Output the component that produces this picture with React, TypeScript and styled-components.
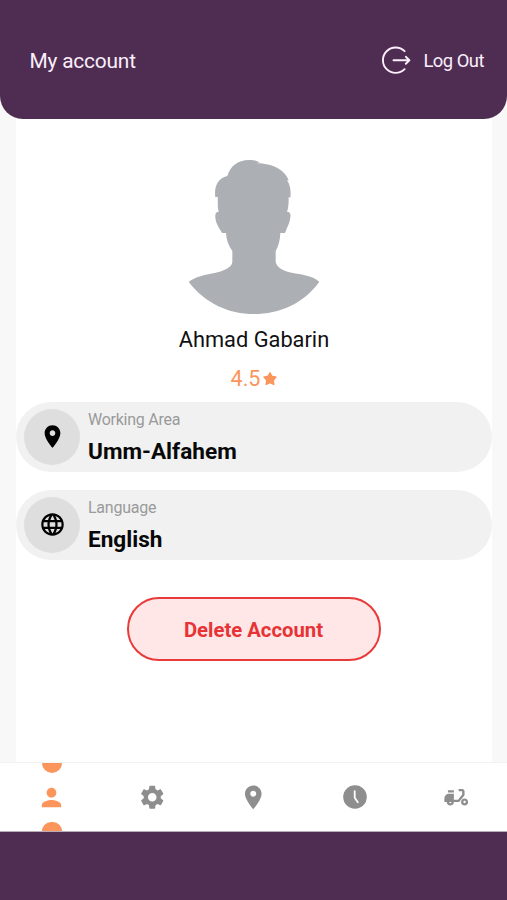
import React from 'react';
import styled, { createGlobalStyle } from 'styled-components';

const GlobalStyle = createGlobalStyle`
  * { box-sizing: border-box; }
  body { margin: 0; background: #4f2d52; font-family: Roboto, 'Liberation Sans', sans-serif; }
  button { font-family: inherit; border: 0; background: none; padding: 0; cursor: pointer; }
  svg { display: block; flex: none; }
`;

const Screen = styled.div`
  height: 900px;
  display: flex;
  flex-direction: column;
  background: #4f2d52;
`;

const Body = styled.div`
  height: 762px;
  display: flex;
  flex-direction: column;
  background: #f8f8f8;
`;

const Header = styled.header`
  height: 119px;
  flex: none;
  padding: 3px 23px 0 29.5px;
  display: flex;
  align-items: center;
  justify-content: space-between;
  background: #4f2d52;
  border-radius: 0 0 23px 23px;
  color: #fbeffb;
`;

const Title = styled.h1`
  margin: 0;
  font-size: 20.9px;
  line-height: 24px;
  letter-spacing: -0.2px;
  font-weight: 400;
`;

const LogOutButton = styled.button`
  display: flex;
  align-items: center;
  gap: 12.5px;
  color: inherit;
  font-size: 18.4px;
  line-height: 24px;
  letter-spacing: -0.5px;
`;

const Content = styled.main`
  flex: 1;
  margin: 0 15px 0 16px;
  display: flex;
  flex-direction: column;
  align-items: center;
  background: #fff;
`;

const Portrait = styled.svg`
  width: 170px;
  height: 180px;
  margin: 26px 0 0 1.5px;
`;

const Name = styled.div`
  margin-top: 2px;
  font-size: 21.8px;
  line-height: 26px;
  color: #111;
`;

const Rating = styled.div`
  margin-top: 14px;
  height: 24px;
  display: flex;
  align-items: center;
  gap: 3px;
  font-size: 21.5px;
  line-height: 26px;
  color: #fb955c;
`;

const Rows = styled.div`
  width: 100%;
  margin-top: 11px;
  display: flex;
  flex-direction: column;
  gap: 18.5px;
`;

const Row = styled.div`
  height: 69.5px;
  padding-left: 8px;
  display: flex;
  align-items: center;
  gap: 8px;
  border-radius: 35px;
  background: #f1f1f1;
`;

const RowIcon = styled.div`
  width: 56px;
  height: 56px;
  border-radius: 50%;
  display: grid;
  place-items: center;
  background: #dedede;
  color: #000;
`;

const RowLabel = styled.div`
  margin-top: 1px;
  font-size: 16px;
  line-height: 20px;
  letter-spacing: -0.25px;
  color: #9a9a9a;
`;

const RowValue = styled.div`
  margin-top: 8px;
  font-size: 22.6px;
  line-height: 27px;
  font-weight: 700;
  color: #080808;
`;

const DeleteButton = styled.button`
  && {
    width: 254px;
    height: 64px;
    margin-top: 37.5px;
    padding: 2px 1px 0 0;
    border: 2px solid #e8393b;
    border-radius: 32px;
    background: #fee7e6;
    color: #e83336;
    font-size: 20.3px;
    font-weight: 700;
  }
`;

const NavBar = styled.nav`
  height: 70px;
  padding-left: 0.5px;
  display: grid;
  grid-template-columns: repeat(5, 1fr);
  border-top: 1px solid #f2f2f2;
  border-bottom: 1px solid #b8adb9;
  background: #fff;
`;

const NavItem = styled.button<{ $active?: boolean }>`
  display: flex;
  flex-direction: column;
  align-items: center;
  justify-content: ${p => (p.$active ? 'space-between' : 'center')};
  color: ${p => (p.$active ? '#fb955c' : '#8e8e8e')};
`;

const HalfDot = styled.span<{ $top?: boolean }>`
  width: 20px;
  height: 9.5px;
  margin-left: 1px;
  background: #fb955c;
  border-radius: ${p => (p.$top ? '0 0 10px 10px' : '10px 10px 0 0')};
`;

const paths = {
  pin: 'M12 2C8.13 2 5 5.13 5 9c0 5.25 7 13 7 13s7-7.75 7-13c0-3.87-3.13-7-7-7zm0 9.5c-1.38 0-2.5-1.12-2.5-2.5s1.12-2.5 2.5-2.5 2.5 1.12 2.5 2.5-1.12 2.5-2.5 2.5z',
  globe:
    'M11.99 2C6.47 2 2 6.48 2 12s4.47 10 9.99 10C17.52 22 22 17.52 22 12S17.52 2 11.99 2zm6.93 6h-2.95c-.32-1.25-.78-2.45-1.38-3.56 1.84.63 3.37 1.91 4.33 3.56zM12 4.04c.83 1.2 1.48 2.53 1.91 3.96h-3.82c.43-1.43 1.08-2.76 1.91-3.96zM4.26 14C4.1 13.36 4 12.69 4 12s.1-1.36.26-2h3.38c-.08.66-.14 1.32-.14 2s.06 1.34.14 2H4.26zm.82 2h2.95c.32 1.25.78 2.45 1.38 3.56-1.84-.63-3.37-1.9-4.33-3.56zm2.95-8H5.08c.96-1.66 2.49-2.93 4.33-3.56C8.81 5.55 8.35 6.75 8.03 8zM12 19.96c-.83-1.2-1.48-2.53-1.91-3.96h3.82c-.43 1.43-1.08 2.76-1.91 3.96zM14.34 14H9.66c-.09-.66-.16-1.32-.16-2s.07-1.35.16-2h4.68c.09.65.16 1.32.16 2s-.07 1.34-.16 2zm.25 5.56c.6-1.11 1.06-2.31 1.38-3.56h2.95c-.96 1.65-2.49 2.93-4.33 3.56zM16.36 14c.08-.66.14-1.32.14-2s-.06-1.34-.14-2h3.38c.16.64.26 1.31.26 2s-.1 1.36-.26 2h-3.38z',
  person:
    'M12 12c2.21 0 4-1.79 4-4s-1.79-4-4-4-4 1.79-4 4 1.79 4 4 4zm0 2c-2.67 0-8 1.34-8 4v2h16v-2c0-2.66-5.33-4-8-4z',
  gear: 'M19.14 12.94c.04-.3.06-.61.06-.94 0-.32-.02-.64-.07-.94l2.03-1.58c.18-.14.23-.41.12-.61l-1.92-3.32c-.12-.22-.37-.29-.59-.22l-2.39.96c-.5-.38-1.03-.7-1.62-.94l-.36-2.54c-.04-.24-.24-.41-.48-.41h-3.84c-.24 0-.43.17-.47.41l-.36 2.54c-.59.24-1.13.57-1.62.94l-2.39-.96c-.22-.08-.47 0-.59.22L2.74 8.87c-.12.21-.08.47.12.61l2.03 1.58c-.05.3-.09.63-.09.94s.02.64.07.94l-2.03 1.58c-.18.14-.23.41-.12.61l1.92 3.32c.12.22.37.29.59.22l2.39-.96c.5.38 1.03.7 1.62.94l.36 2.54c.05.24.24.41.48.41h3.84c.24 0 .44-.17.47-.41l.36-2.54c.59-.24 1.13-.56 1.62-.94l2.39.96c.22.08.47 0 .59-.22l1.92-3.32c.12-.22.07-.47-.12-.61l-2.01-1.58zM12 15.6c-1.98 0-3.6-1.62-3.6-3.6s1.62-3.6 3.6-3.6 3.6 1.62 3.6 3.6-1.62 3.6-3.6 3.6z',
  moped:
    'M19 7c0-1.1-.9-2-2-2h-3v2h3v2.65L13.52 14H10V9H6c-2.21 0-4 1.79-4 4v3h2c0 1.66 1.34 3 3 3s3-1.34 3-3h4.48L19 10.35V7zM7 17c-.55 0-1-.45-1-1h2c0 .55-.45 1-1 1zM5 6h5v2H5zM19 13c-1.66 0-3 1.34-3 3s1.34 3 3 3 3-1.34 3-3-1.34-3-3-3zm0 4c-.55 0-1-.45-1-1s.45-1 1-1 1 .45 1 1-.45 1-1 1z',
};

const Icon = ({ d, size }: { d: string; size: number }) => (
  <svg width={size} height={size} viewBox="0 0 24 24" fill="currentColor">
    <path d={d} />
  </svg>
);

const LogOutIcon = () => (
  <svg width="29" height="30" viewBox="0 0 29 30" fill="none" stroke="currentColor" strokeWidth="1.9" strokeLinecap="round" strokeLinejoin="round">
    <path d="M22.6 5.2A12.7 12.7 0 1 0 22.6 23.2" />
    <path d="M11.5 14.3H27M23.8 10.8l3.6 3.5-3.6 3.5" />
  </svg>
);

const ClockIcon = () => (
  <svg width="24" height="24" viewBox="0 0 24 24">
    <circle cx="12" cy="12" r="11.8" fill="#8e8e8e" />
    <path d="M11.7 6.2v6.6l3.1 4.5" fill="none" stroke="#fff" strokeWidth="1.8" strokeLinecap="round" strokeLinejoin="round" />
  </svg>
);

const StarIcon = () => (
  <svg width="14" height="14" viewBox="0 0 14 14" fill="currentColor" stroke="currentColor" strokeWidth="1.4" strokeLinejoin="round">
    <path d="M7 .8l1.9 3.5 4.1.8-2.8 3.1.6 4.2L7 10.7l-3.8 1.7.6-4.2L1 5.1l4.1-.8z" />
  </svg>
);

const Avatar = () => (
  <Portrait viewBox="0 0 510 540" fill="#acafb3">
    <path d="M56 410C77 394 108 389 137 383C163 377 187 366 187 350V318C176 303 169 286 168 264H156C148 248 137 237 136 216C135 205 139 200 146 200C142 186 144 170 143 155L136 157C132 131 140 100 172 93C180 65 202 45 238 45C252 44 262 48 269 53L258 55C302 54 346 73 356 107L351 105C362 122 363 142 361 158L356 156C356 172 356 188 351 200C359 200 363 205 361 216C359 237 350 249 345 264H331C330 286 326 303 317 318V350C319 365 337 377 365 383C395 389 428 391 448 410C402 475 328 507 252 507C176 507 104 474 56 410Z" />
  </Portrait>
);

const rows = [
  { icon: paths.pin, label: 'Working Area', value: 'Umm-Alfahem' },
  { icon: paths.globe, label: 'Language', value: 'English' },
];

export default function App() {
  return (
    <Screen>
      <GlobalStyle />
      <Body>
        <Header>
          <Title>My account</Title>
          <LogOutButton>
            <LogOutIcon />
            Log Out
          </LogOutButton>
        </Header>
        <Content>
          <Avatar />
          <Name>Ahmad Gabarin</Name>
          <Rating>
            4.5
            <StarIcon />
          </Rating>
          <Rows>
            {rows.map(r => (
              <Row key={r.label}>
                <RowIcon>
                  <Icon d={r.icon} size={27} />
                </RowIcon>
                <div>
                  <RowLabel>{r.label}</RowLabel>
                  <RowValue>{r.value}</RowValue>
                </div>
              </Row>
            ))}
          </Rows>
          <DeleteButton>Delete Account</DeleteButton>
        </Content>
      </Body>
      <NavBar>
        <NavItem $active aria-label="Account">
          <HalfDot $top />
          <Icon d={paths.person} size={29} />
          <HalfDot />
        </NavItem>
        <NavItem aria-label="Settings">
          <Icon d={paths.gear} size={28.5} />
        </NavItem>
        <NavItem aria-label="Locations">
          <Icon d={paths.pin} size={28.5} />
        </NavItem>
        <NavItem aria-label="History">
          <ClockIcon />
        </NavItem>
        <NavItem aria-label="Deliveries">
          <Icon d={paths.moped} size={28.5} />
        </NavItem>
      </NavBar>
    </Screen>
  );
}
